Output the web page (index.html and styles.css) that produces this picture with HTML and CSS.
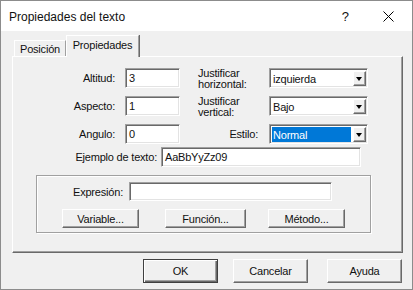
FILE: index.html
```html
<!DOCTYPE html>
<html lang="es">
<head>
<meta charset="utf-8">
<title>Propiedades del texto</title>
<link rel="stylesheet" href="styles.css">
</head>
<body>
<div class="window">
  <div class="titlebar">
    <span class="title">Propiedades del texto</span>
    <span class="help">?</span>
    <svg class="close" width="11" height="11" viewBox="0 0 11 11"><path d="M0.5 0.5 L10.5 10.5 M10.5 0.5 L0.5 10.5" stroke="#000" stroke-width="1" fill="none"/></svg>
  </div>
  <div class="tabs">
    <div class="tab">Posición</div>
    <div class="tab active">Propiedades</div>
  </div>
  <div class="panel">
    <div class="grid">
      <div class="lbl">Altitud:</div>
      <div class="cell"><div class="input short">3</div></div>
      <div class="lbl2">Justificar<br>horizontal:</div>
      <div class="select"><span class="val">izquierda</span><span class="drop"><span class="tri"></span></span></div>

      <div class="lbl">Aspecto:</div>
      <div class="cell"><div class="input short">1</div></div>
      <div class="lbl2">Justificar<br>vertical:</div>
      <div class="select"><span class="val">Bajo</span><span class="drop"><span class="tri"></span></span></div>

      <div class="lbl">Angulo:</div>
      <div class="cell"><div class="input short">0</div></div>
      <div class="lbl2 right">Estilo:</div>
      <div class="select"><span class="val sel">Normal</span><span class="drop"><span class="tri"></span></span></div>
    </div>
    <div class="sample-row">
      <div class="sample-lbl">Ejemplo de texto:</div>
      <div class="input sample">AaBbYyZz09</div>
    </div>
    <div class="group">
      <div class="expr-row">
        <div class="expr-lbl">Expresión:</div>
        <div class="input expr"></div>
      </div>
      <div class="btn-row">
        <div class="btn b-var">Variable...</div>
        <div class="btn b-fun">Función...</div>
        <div class="btn b-met">Método...</div>
      </div>
    </div>
  </div>
  <div class="footer">
    <div class="btn big default">OK</div>
    <div class="btn big b-cancel">Cancelar</div>
    <div class="btn big b-help">Ayuda</div>
  </div>
</div>
</body>
</html>
```

FILE: styles.css
```css
* { box-sizing: border-box; }
html, body { margin: 0; padding: 0; background: #fff; }
body {
  font-family: "Liberation Sans", Arial, sans-serif;
  font-size: 11px;
  letter-spacing: -0.2px;
  color: #111;
}
.window {
  width: 413px;
  height: 290px;
  border: 1px solid #8c8c8c;
  background: #f0f0f0;
  overflow: hidden;
}
.titlebar {
  height: 30px;
  background: #fff;
  display: flex;
  align-items: center;
  padding-left: 8px;
}
.title {
  font-size: 12px;
  letter-spacing: 0;
  padding-top: 1px;
}
.help {
  margin-left: auto;
  font-size: 13px;
  letter-spacing: 0;
  margin-right: 34px;
  padding-top: 1px;
}
.close {
  display: block;
  margin-right: 18px;
  margin-top: 1px;
}
.tabs {
  display: flex;
  align-items: flex-end;
  height: 26px;
  padding-left: 13px;
  margin-bottom: -1px;
}
.tab {
  position: relative;
  height: 16px;
  width: 52px;
  border-top: 1px solid #fff;
  border-left: 1px solid #fff;
  border-right: 1px solid #a0a0a0;
  box-shadow: 1px 0 0 #696969;
  display: flex;
  align-items: center;
  justify-content: center;
  padding-top: 1px;
  margin-bottom: 1px;
}
.tab.active {
  height: 22px;
  width: 73px;
  margin-bottom: 0;
  background: #f0f0f0;
  z-index: 2;
  align-items: flex-start;
  padding-top: 3px;
}
.panel {
  margin-left: 11px;
  width: 391px;
  height: 197px;
  border-top: 1px solid #fff;
  border-left: 1px solid #fff;
  border-right: 1px solid #696969;
  border-bottom: 1px solid #696969;
  box-shadow: inset -1px -1px 0 #a0a0a0;
}
.grid {
  margin-top: 11px;
  display: grid;
  grid-template-columns: 112px 73px 71px 99px;
  grid-auto-rows: 20px;
  row-gap: 8px;
}
.lbl {
  text-align: right;
  padding-right: 10px;
  align-self: center;
}
.cell { display: flex; }
.input {
  background: #fff;
  border-top: 1px solid #a0a0a0;
  border-left: 1px solid #a0a0a0;
  border-right: 1px solid #fff;
  border-bottom: 1px solid #fff;
  box-shadow: inset 1px 1px 0 #696969, inset -1px -1px 0 #e3e3e3;
  height: 20px;
  padding-left: 3px;
  display: flex;
  align-items: center;
}
.input.short { width: 55px; }
.lbl2 {
  align-self: center;
  line-height: 11px;
  padding-top: 1px;
}
.lbl2.right {
  text-align: right;
  padding-right: 11px;
}
.select {
  background: #fff;
  border-top: 1px solid #a0a0a0;
  border-left: 1px solid #a0a0a0;
  border-right: 1px solid #fff;
  border-bottom: 1px solid #fff;
  box-shadow: inset 1px 1px 0 #696969, inset -1px -1px 0 #e3e3e3;
  height: 20px;
  width: 99px;
  display: flex;
  align-items: stretch;
  padding: 2px 1px 1px 2px;
}
.val {
  flex: 1;
  display: flex;
  align-items: center;
  padding-left: 1px;
  margin-right: 2px;
}
.val.sel {
  background: #0078d7;
  color: #fff;
}
.drop {
  width: 13px;
  background: #f0f0f0;
  border-top: 1px solid #fff;
  border-left: 1px solid #fff;
  border-right: 1px solid #696969;
  border-bottom: 1px solid #696969;
  box-shadow: inset -1px -1px 0 #a0a0a0;
  display: flex;
  align-items: center;
  justify-content: center;
}
.tri {
  width: 0;
  height: 0;
  border-left: 3px solid transparent;
  border-right: 3px solid transparent;
  border-top: 4px solid #000;
  margin-left: -1px;
}
.sample-row {
  display: flex;
  align-items: center;
  margin-top: 3px;
}
.sample-lbl {
  width: 144px;
  text-align: right;
}
.input.sample {
  margin-left: 4px;
  width: 200px;
}
.group {
  margin-top: 8px;
  margin-left: 23px;
  width: 335px;
  height: 58px;
  border: 1px solid #a0a0a0;
  box-shadow: inset 1px 1px 0 #fff, 1px 1px 0 #fff;
}
.expr-row {
  display: flex;
  align-items: center;
  margin-top: 6px;
}
.expr-lbl {
  width: 86px;
  text-align: right;
}
.input.expr {
  margin-left: 6px;
  width: 203px;
  height: 19px;
}
.btn-row {
  display: flex;
  margin-top: 8px;
  padding-left: 25px;
}
.btn {
  height: 19px;
  background: #f0f0f0;
  border-top: 1px solid #fff;
  border-left: 1px solid #fff;
  border-right: 1px solid #696969;
  border-bottom: 1px solid #696969;
  box-shadow: inset -1px -1px 0 #a0a0a0;
  display: flex;
  align-items: center;
  justify-content: center;
}
.b-var { width: 77px; }
.b-fun { width: 81px; margin-left: 26px; }
.b-met { width: 77px; margin-left: 22px; }
.footer {
  display: flex;
  margin-top: 6px;
  padding-left: 142px;
}
.btn.big {
  width: 75px;
  height: 24px;
}
.btn.default {
  border: 1px solid #404040;
  box-shadow: inset 1px 1px 0 #fff, inset -1px -1px 0 #696969, inset -2px -2px 0 #a0a0a0;
}
.b-cancel { margin-left: 15px; }
.b-help { margin-left: 19px; }
```
